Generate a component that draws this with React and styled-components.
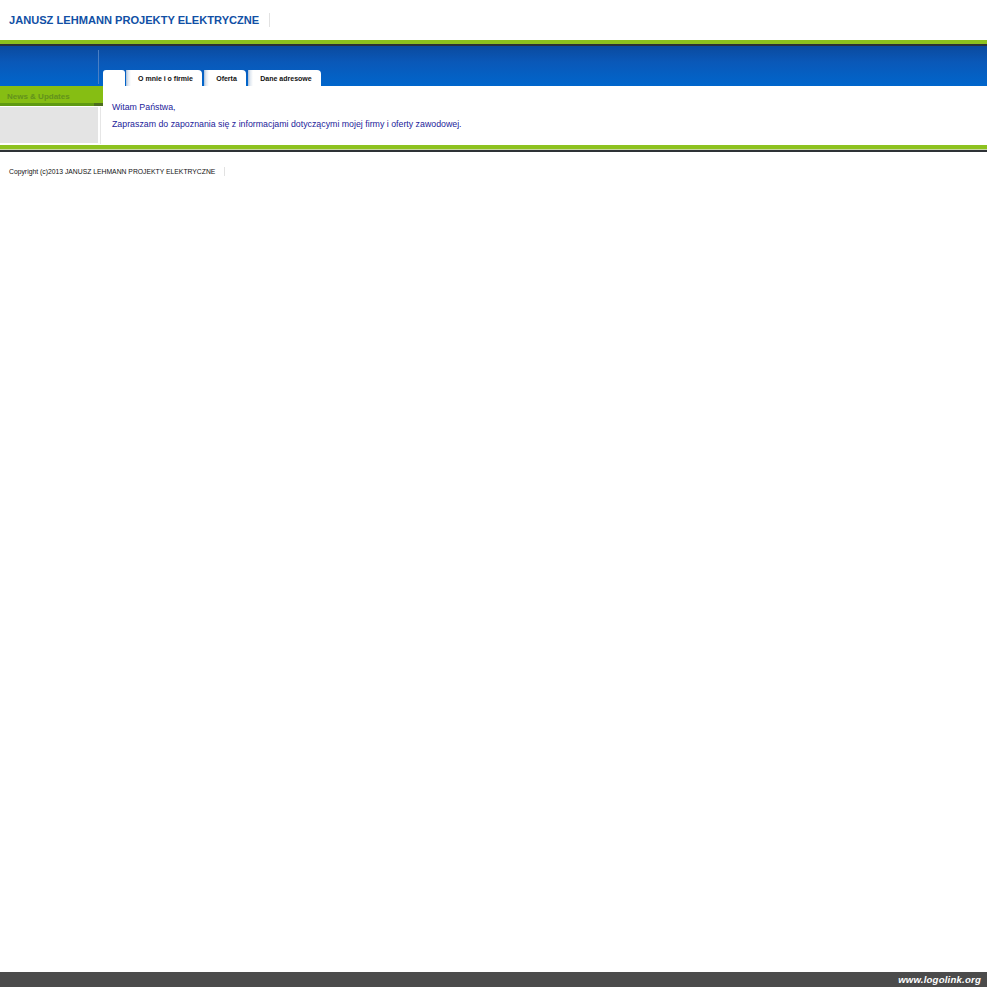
import React from "react";
import styled, { createGlobalStyle } from "styled-components";

const Global = createGlobalStyle`
  html, body { margin: 0; padding: 0; background: #fff; }
  body { font-family: "Liberation Sans", Arial, sans-serif; }
  #root { min-height: 987px; position: relative; }
`;

const Page = styled.div`
  width: 987px;
  height: 987px;
  display: flex;
  flex-direction: column;
  position: relative;
`;

const Header = styled.div`
  height: 40px;
  display: flex;
  align-items: center;
  padding-left: 9px;
`;

const Title = styled.div`
  font-size: 11.1px;
  font-weight: bold;
  color: #1150a5;
  padding-right: 10px;
  border-right: 1px solid #e2e2e2;
  line-height: 14px;
  margin-top: -1px;
`;

const Stripe = styled.div`
  height: ${(p) => p.$h}px;
  background: ${(p) => p.$c};
`;

const Band = styled.div`
  height: 40px;
  background: linear-gradient(#0b4a9e 0%, #0a58b8 40%, #0066cc 100%);
  display: flex;
`;

const BandSide = styled.div`
  width: 98px;
  height: 34px;
  margin-top: 4px;
  border-right: 1px solid #4a7fc4;
`;

const Tabs = styled.div`
  display: flex;
  align-items: flex-end;
  gap: 2px;
  padding-left: 4px;
  margin-top: 24px;
`;

const Tab = styled.div`
  height: 16px;
  width: ${(p) => p.$w}px;
  box-sizing: border-box;
  background: linear-gradient(90deg, #a9bdd6 0px, #dfe7f0 2px, #ffffff 5px);
  border-radius: 0 4px 0 0;
  font-size: 7px;
  font-weight: bold;
  color: #111;
  display: flex;
  align-items: center;
  justify-content: center;
  padding-left: 3px;
  padding-top: 1px;
`;

const FirstTab = styled(Tab)`
  background: #fff;
  border-radius: 3px 3px 0 0;
  margin-right: -1px;
`;

const Main = styled.div`
  display: flex;
  height: 58px;
`;

const Sidebar = styled.div`
  width: 103px;
  display: flex;
  flex-direction: column;
`;

const SideHead = styled.div`
  height: 17px;
  box-sizing: border-box;
  padding-top: 3px;
  background: #86be13;
  color: #63921c;
  font-size: 8px;
  font-weight: bold;
  display: flex;
  align-items: center;
  padding-left: 7px;
`;

const SideRule = styled.div`
  height: 3px;
  background: linear-gradient(90deg, #5f9a12 0, #5f9a12 94px, #4d6e1e 94px);
`;

const SideBody = styled.div`
  flex: 1;
  width: 98px;
  margin-top: 1px;
  margin-bottom: 1px;
  background: #e4e4e4;
`;

const Content = styled.div`
  flex: 1;
  padding: 16px 0 0 9px;
  color: #23239a;
  font-size: 8.8px;
`;

const ContentEdge = styled.div`
  width: 1px;
  background: #e6e6e6;
  margin-top: 21px;
  margin-left: -3px;
  margin-right: 2px;
`;

const Para = styled.p`
  margin: 0 0 7px;
  line-height: 10px;
`;

const Footer = styled.div`
  padding: 15px 0 0 9px;
  display: flex;
`;

const Copy = styled.div`
  font-size: 6.8px;
  color: #111;
  padding-right: 9px;
  border-right: 1px solid #e2e2e2;
  line-height: 9px;
`;

const Bottom = styled.div`
  position: absolute;
  left: 0;
  right: 0;
  bottom: 0;
  height: 15px;
  background: #4b4b4b;
  display: flex;
  align-items: center;
  justify-content: flex-end;
  padding-right: 6px;
`;

const Logo = styled.span`
  color: #fff;
  font-style: italic;
  font-weight: bold;
  font-size: 9.6px;
  letter-spacing: 0.2px;
`;

export default function App() {
  return (
    <Page>
      <Global />
      <Header>
        <Title>JANUSZ LEHMANN PROJEKTY ELEKTRYCZNE</Title>
      </Header>
      <Stripe $h={4} $c="#8dc21f" />
      <Stripe $h={2} $c="#2e3236" />
      <Band>
        <BandSide />
        <Tabs>
          <FirstTab $w={22} />
          <Tab $w={76}>O mnie i o firmie</Tab>
          <Tab $w={42}>Oferta</Tab>
          <Tab $w={73}>Dane adresowe</Tab>
        </Tabs>
      </Band>
      <Main>
        <Sidebar>
          <SideHead>News &amp; Updates</SideHead>
          <SideRule />
          <SideBody />
        </Sidebar>
        <ContentEdge />
        <Content>
          <Para>Witam Państwa,</Para>
          <Para>Zapraszam do zapoznania się z informacjami dotyczącymi mojej firmy i oferty zawodowej.</Para>
        </Content>
      </Main>
      <Stripe $h={1} $c="#fff" />
      <Stripe $h={4} $c="#8dc21f" />
      <Stripe $h={1} $c="#c8d8a0" />
      <Stripe $h={2} $c="#2e3236" />
      <Footer>
        <Copy>Copyright (c)2013 JANUSZ LEHMANN PROJEKTY ELEKTRYCZNE</Copy>
      </Footer>
      <Bottom>
        <Logo>www.logolink.org</Logo>
      </Bottom>
    </Page>
  );
}
